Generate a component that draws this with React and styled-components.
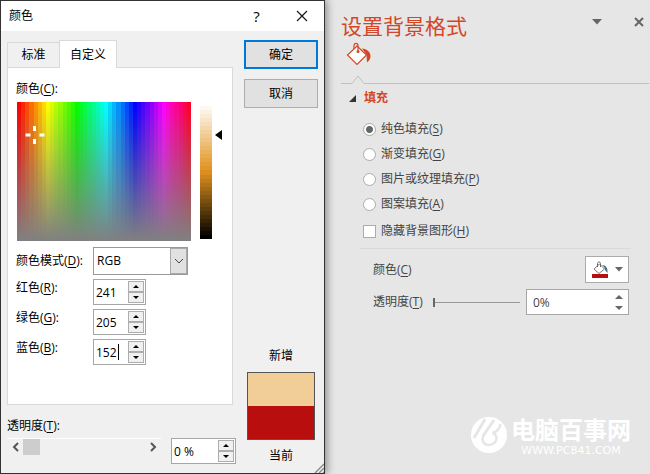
import React, { useState } from "react";
import styled, { createGlobalStyle } from "styled-components";

const GlobalStyle = createGlobalStyle`
  *, *::before, *::after {
    box-sizing: border-box;
  }
  body {
    margin: 0;
    background: #e6e6e6;
  }
  body, button, input, select {
    font-family: "Open Sans", "Noto Sans CJK SC", sans-serif;
    font-size: 12px;
    line-height: 16px;
  }
  button, input, select {
    margin: 0;
    padding: 0;
    color: inherit;
  }
  u {
    text-underline-offset: 2px;
  }
`;

const HUE_BANDS = 42;
const LIGHT_BANDS = 34;

const bands = (direction, count, colorAt) => {
  const stops = Array.from({ length: count }, (_, i) => {
    const from = (i * 100) / count;
    const to = ((i + 1) * 100) / count;
    return `${colorAt(i)} ${from}% ${to}%`;
  });
  return `linear-gradient(${direction}, ${stops.join(", ")})`;
};

const hueBands = bands(
  "to right",
  HUE_BANDS,
  (i) => `hsl(${(i * 360) / HUE_BANDS}, 100%, 50%)`
);
const lightBands = bands(
  "to bottom",
  LIGHT_BANDS,
  (i) => `hsl(36, 76%, ${100 - (i * 100) / (LIGHT_BANDS - 1)}%)`
);

function Spinner({ id, label, value, caret, flat, grow }) {
  const [text, setText] = useState(value);
  return (
    <SpinBox $grow={grow}>
      <SpinField>
        <SpinInput
          id={id}
          aria-label={label}
          value={text}
          $flat={flat}
          onChange={(e) => setText(e.target.value)}
        />
        {caret && <Caret />}
      </SpinField>
      <SpinButtons>
        <SpinButton type="button" aria-label="+" $flat={flat}>
          <Triangle $up $flat={flat} />
        </SpinButton>
        <SpinButton type="button" aria-label="-" $flat={flat}>
          <Triangle $flat={flat} />
        </SpinButton>
      </SpinButtons>
    </SpinBox>
  );
}

function ColorPicker() {
  return (
    <Picker>
      <Spectrum>
        <Crosshair viewBox="0 0 20 20">
          <path
            d="M9.5 1v5M9.5 14v5M0.5 10h5M14.5 10h5"
            stroke="#fff"
            strokeWidth="3"
            fill="none"
          />
        </Crosshair>
      </Spectrum>
      <LightBar />
      <LightMark viewBox="0 0 7 10">
        <path d="M0 5L7 0v10z" />
      </LightMark>
    </Picker>
  );
}

function ColorDialog() {
  return (
    <Dialog>
      <TitleBar>
        <DialogTitle>颜色</DialogTitle>
        <TitleButton type="button">?</TitleButton>
        <TitleButton type="button" aria-label="×">
          <svg width="12" height="12" viewBox="0 0 12 12">
            <path d="M1 1l10 10M11 1L1 11" stroke="#111" strokeWidth="1.1" />
          </svg>
        </TitleButton>
      </TitleBar>
      <DialogBody>
        <MainColumn>
          <Tabs>
            <Tab type="button">标准</Tab>
            <Tab type="button" $active>
              自定义
            </Tab>
          </Tabs>
          <TabPanel>
            <PickerLabel>
              颜色(<u>C</u>):
            </PickerLabel>
            <ColorPicker />
            <Fields>
              <FieldLabel htmlFor="mode" $middle>
                颜色模式(<u>D</u>):
              </FieldLabel>
              <SelectBox>
                <Select id="mode" defaultValue="RGB">
                  <option>RGB</option>
                </Select>
                <SelectArrow>
                  <svg width="10" height="6" viewBox="0 0 10 6">
                    <path d="M1 1l4 4 4-4" stroke="#444" fill="none" />
                  </svg>
                </SelectArrow>
              </SelectBox>
              <FieldLabel htmlFor="red">
                红色(<u>R</u>):
              </FieldLabel>
              <Spinner id="red" value="241" />
              <FieldLabel htmlFor="green">
                绿色(<u>G</u>):
              </FieldLabel>
              <Spinner id="green" value="205" />
              <FieldLabel htmlFor="blue">
                蓝色(<u>B</u>):
              </FieldLabel>
              <Spinner id="blue" value="152" caret />
            </Fields>
          </TabPanel>
          <AlphaLabel htmlFor="alpha">
            透明度(<u>T</u>):
          </AlphaLabel>
          <AlphaRow>
            <ScrollBar>
              <ScrollArrow type="button" aria-label="-">
                <svg width="7" height="10" viewBox="0 0 7 10">
                  <path d="M6 1L2 5l4 4" stroke="#555" strokeWidth="2" fill="none" />
                </svg>
              </ScrollArrow>
              <ScrollRange type="range" id="alpha" defaultValue="0" />
              <ScrollArrow type="button" aria-label="+">
                <svg width="7" height="10" viewBox="0 0 7 10">
                  <path d="M1 1l4 4-4 4" stroke="#555" strokeWidth="2" fill="none" />
                </svg>
              </ScrollArrow>
            </ScrollBar>
            <AlphaValue>
              <Spinner label="透明度" value="0 %" grow />
            </AlphaValue>
          </AlphaRow>
        </MainColumn>
        <SideColumn>
          <DialogButton type="button" $primary>
            确定
          </DialogButton>
          <DialogButton type="button">取消</DialogButton>
          <Preview>
            新增
            <Swatches>
              <Swatch $color="#f1cd98" />
              <Swatch $color="#b90e0e" />
            </Swatches>
            当前
          </Preview>
        </SideColumn>
        <Grip viewBox="0 0 10 10">
          <path d="M1 10L10 1M5 10l5-5M9 10l1-1" stroke="#888" strokeWidth="1.4" />
        </Grip>
      </DialogBody>
    </Dialog>
  );
}

const FILLS = [
  ["纯色填充", "S"],
  ["渐变填充", "G"],
  ["图片或纹理填充", "P"],
  ["图案填充", "A"],
];

function FormatPane() {
  const [fill, setFill] = useState("S");
  return (
    <Pane>
      <PaneHeader>
        <PaneTitle>设置背景格式</PaneTitle>
        <PaneButton type="button" aria-label="▾">
          <svg width="10" height="6" viewBox="0 0 10 6">
            <path d="M0 0h10L5 5.5z" fill="#666" />
          </svg>
        </PaneButton>
        <PaneButton type="button" aria-label="×">
          <svg width="10" height="10" viewBox="0 0 10 10">
            <path d="M1 1l8 8M9 1L1 9" stroke="#666" strokeWidth="2" />
          </svg>
        </PaneButton>
      </PaneHeader>
      <BucketTab type="button" aria-label="填充">
        <svg width="26" height="24" viewBox="0 0 26 24">
          <path
            d="M16 6.500c5 .5 8.500 3.500 8.500 7.500 0 2.500-1 4.500-3.500 6.500l-.5-8z"
            fill="#d24726"
          />
          <path
            d="M11 4L20.500 13 11 22.500 1.500 13z"
            fill="#fff"
            stroke="#d24726"
            strokeWidth="1.200"
          />
          <path
            d="M8 7V3.500C8 .7 12 .7 12 3.500V9"
            fill="none"
            stroke="#d24726"
            strokeWidth="1.200"
          />
          <circle cx="12" cy="9.500" r="1.500" fill="#d24726" />
        </svg>
      </BucketTab>
      <Divider>
        <DividerLine />
        <svg width="14" height="9" viewBox="0 0 14 9">
          <path d="M0 8.500h1L7 1l6 7.500h1" fill="none" stroke="#c0c0c0" />
        </svg>
        <DividerLine $rest />
      </Divider>
      <SectionTitle>
        <svg width="7" height="7" viewBox="0 0 7 7">
          <path d="M7 0v7H0z" fill="#333" />
        </svg>
        填充
      </SectionTitle>
      <Options>
        {FILLS.map(([name, key]) => (
          <Option key={key}>
            <Radio
              type="radio"
              name="fill"
              checked={fill === key}
              onChange={() => setFill(key)}
            />
            <span>
              {name}(<u>{key}</u>)
            </span>
          </Option>
        ))}
        <Option $apart>
          <Checkbox type="checkbox" />
          <span>
            隐藏背景图形(<u>H</u>)
          </span>
        </Option>
      </Options>
      <Settings>
        <SettingRow>
          <SettingLabel htmlFor="fill-color">
            颜色(<u>C</u>)
          </SettingLabel>
          <ColorButton type="button" id="fill-color">
            <svg width="18" height="18" viewBox="0 0 18 18">
              <path d="M11 4c4 0 6 3 5.500 8L14 9c0-2-1-3.500-3-5z" fill="#44708f" />
              <path d="M8.500 3L13.500 8 8 12.500 3 8z" fill="#fff" stroke="#777" />
              <path d="M6.500 6V2.500c0-2 3-2 3 0V6" fill="none" stroke="#666" />
              <path d="M1 13h16v4H1z" fill="#b90e0e" />
            </svg>
            <svg width="8" height="5" viewBox="0 0 8 5">
              <path d="M0 0h8L4 4.500z" fill="#666" />
            </svg>
          </ColorButton>
        </SettingRow>
        <SettingRow>
          <label htmlFor="pane-alpha">
            透明度(<u>T</u>)
          </label>
          <AlphaSlider type="range" id="pane-alpha" defaultValue="0" />
          <PaneValue>
            <Spinner label="透明度" value="0%" flat grow />
          </PaneValue>
        </SettingRow>
      </Settings>
      <Brand>
        <svg width="36" height="38" viewBox="0 0 36 38">
          <circle cx="18" cy="19" r="18" fill="#fff" />
          <path d="M14 3L3 22" stroke="#e6e6e6" strokeWidth="3" fill="none" />
          <path
            d="M23 4L12 20"
            stroke="#e6e6e6"
            strokeWidth="3"
            fill="none"
          />
          <path
            d="M13 18c-3 6-1 10.500 4 11 5 .5 9-3.500 8.500-7.500-.5-2.500-2-4-4-4.500 4-1 7-4 8-9"
            stroke="#e6e6e6"
            strokeWidth="2.500"
            fill="none"
          />
        </svg>
        <div>
          <BrandName>电脑百事网</BrandName>
          <BrandSite>WWW.PC841.COM</BrandSite>
        </div>
      </Brand>
    </Pane>
  );
}

export default function App() {
  return (
    <Page>
      <GlobalStyle />
      <ColorDialog />
      <FormatPane />
    </Page>
  );
}

const Page = styled.div`
  display: grid;
  grid-template-columns: minmax(0, 1fr) minmax(0, 1fr);
  min-height: 100vh;
`;

const Dialog = styled.section`
  display: flex;
  flex-direction: column;
  border: 1px solid #333;
  background: #f0f0f0;
  color: #000;
  box-shadow: 2px 0 8px rgba(0, 0, 0, 0.4);
  z-index: 1;
`;

const TitleBar = styled.header`
  display: flex;
  align-items: center;
  height: 30px;
  padding-left: 8px;
  background: #fff;
`;

const DialogTitle = styled.h1`
  flex: 1;
  margin: 0;
  font-size: 12px;
  font-weight: 400;
`;

const TitleButton = styled.button`
  display: flex;
  align-items: center;
  justify-content: center;
  width: 45px;
  height: 30px;
  border: 0;
  background: none;
  font-size: 15px;
`;

const DialogBody = styled.div`
  position: relative;
  display: flex;
  flex: 1;
  gap: 8px;
  padding: 9px 6px 8px;
`;

const MainColumn = styled.div`
  flex: 1;
  min-width: 0;
`;

const Tabs = styled.div`
  display: flex;
  align-items: flex-end;
  height: 27px;
`;

const Tab = styled.button`
  height: ${(p) => (p.$active ? 28 : 25)}px;
  width: ${(p) => (p.$active ? 58 : 52)}px;
  margin-bottom: ${(p) => (p.$active ? -1 : 0)}px;
  border: 1px solid #d9d9d9;
  border-bottom: 0;
  border-right-width: ${(p) => (p.$active ? 1 : 0)}px;
  background: ${(p) => (p.$active ? "#fff" : "#f0f0f0")};
  z-index: 1;
`;

const TabPanel = styled.div`
  min-height: 338px;
  margin-right: 3px;
  padding: 13px 8px;
  border: 1px solid #d9d9d9;
  background: #fff;
`;

const PickerLabel = styled.div`
  margin-bottom: 5px;
`;

const Picker = styled.div`
  display: flex;
  margin-left: 1px;
`;

const Spectrum = styled.div`
  position: relative;
  flex: 1;
  height: 139px;
  background: linear-gradient(to bottom, rgba(128, 128, 128, 0), #808080),
    ${hueBands};
`;

const Crosshair = styled.svg`
  position: absolute;
  left: 8px;
  top: 23px;
  width: 20px;
  height: 20px;
`;

const LightBar = styled.div`
  width: 12px;
  height: 137px;
  margin-left: 9px;
  background: ${lightBands};
`;

const LightMark = styled.svg`
  width: 7px;
  height: 10px;
  margin: 28px 2px 0 3px;
`;

const Fields = styled.div`
  display: grid;
  grid-template-columns: 77px 1fr;
  row-gap: 4px;
  margin-top: 6px;
`;

const FieldLabel = styled.label`
  padding-top: ${(p) => (p.$middle ? 6 : 1)}px;
`;

const SelectBox = styled.div`
  display: flex;
  position: relative;
  width: 95px;
  height: 28px;
  border: 1px solid #999;
  background: #fff;
`;

const Select = styled.select`
  width: 100%;
  padding-left: 3px;
  border: 0;
  background: none;
  appearance: none;
`;

const SelectArrow = styled.span`
  position: absolute;
  top: 0;
  right: 0;
  bottom: 0;
  display: flex;
  align-items: center;
  justify-content: center;
  width: 17px;
  border: 1px solid #aaa;
  background: #e1e1e1;
  pointer-events: none;
`;

const SpinBox = styled.div`
  display: flex;
  width: ${(p) => (p.$grow ? "100%" : "53px")};
  height: 26px;
  border: 1px solid #a6a6a6;
  background: #fff;
`;

const SpinField = styled.div`
  position: relative;
  flex: 1;
  min-width: 0;
`;

const SpinInput = styled.input`
  width: 100%;
  height: 24px;
  padding-left: ${(p) => (p.$flat ? 6 : 2)}px;
  border: 0;
  outline: 0;
  background: none;
`;

const Caret = styled.span`
  position: absolute;
  top: 4px;
  left: 24px;
  width: 1px;
  height: 16px;
  background: #000;
`;

const SpinButtons = styled.div`
  display: flex;
  flex-direction: column;
  width: 16px;
  margin: 1px;
`;

const SpinButton = styled.button`
  display: flex;
  flex: 1;
  align-items: center;
  justify-content: center;
  border: ${(p) => (p.$flat ? "0" : "1px solid #adadad")};
  background: ${(p) => (p.$flat ? "none" : "#f0f0f0")};
`;

const Triangle = styled.span`
  --size: ${(p) => (p.$flat ? 4 : 3)}px;
  --fill: ${(p) => (p.$flat ? "#666" : "#000")};
  border: var(--size) solid transparent;
  border-top: ${(p) => (p.$up ? "0" : "var(--size) solid var(--fill)")};
  border-bottom: ${(p) => (p.$up ? "var(--size) solid var(--fill)" : "0")};
`;

const AlphaLabel = styled.label`
  display: block;
  margin: 13px 0 4px;
`;

const AlphaRow = styled.div`
  display: flex;
  gap: 10px;
`;

const ScrollBar = styled.div`
  display: flex;
  flex: 1;
  min-width: 0;
  height: 17px;
  border-top: 1px solid #fff;
`;

const ScrollArrow = styled.button`
  display: flex;
  align-items: center;
  justify-content: center;
  width: 16px;
  border: 0;
  background: none;
`;

const ScrollRange = styled.input`
  flex: 1;
  min-width: 0;
  appearance: none;
  background: none;
  &::-webkit-slider-thumb {
    appearance: none;
    width: 17px;
    height: 16px;
    background: #cdcdcd;
  }
`;

const AlphaValue = styled.div`
  width: 65px;
`;

const SideColumn = styled.div`
  display: flex;
  flex-direction: column;
  gap: 10px;
  width: 74px;
`;

const DialogButton = styled.button`
  height: 29px;
  border: ${(p) => (p.$primary ? "2px solid #0078d7" : "1px solid #adadad")};
  background: #e1e1e1;
`;

const Preview = styled.div`
  display: flex;
  flex-direction: column;
  align-items: center;
  gap: 8px;
  margin-top: auto;
  padding-bottom: 1px;
  text-align: center;
`;

const Swatches = styled.div`
  width: 68px;
  border: 1px solid #555;
`;

const Swatch = styled.div`
  height: 33px;
  background: ${(p) => p.$color};
`;

const Grip = styled.svg`
  position: absolute;
  right: 0;
  bottom: 0;
  width: 10px;
  height: 10px;
`;

const Pane = styled.aside`
  display: flex;
  flex-direction: column;
  padding: 10px 1px 18px 16px;
  color: #444;
`;

const PaneHeader = styled.header`
  display: flex;
  align-items: flex-start;
  gap: 22px;
`;

const PaneTitle = styled.h2`
  flex: 1;
  margin: 0;
  color: #d24726;
  font-size: 21px;
  font-weight: 400;
  line-height: 32px;
`;

const PaneButton = styled.button`
  display: flex;
  align-items: center;
  justify-content: center;
  width: 20px;
  height: 24px;
  border: 0;
  background: none;
`;

const BucketTab = styled.button`
  align-self: flex-start;
  height: 24px;
  margin-left: 5px;
  border: 0;
  background: none;
`;

const Divider = styled.div`
  display: flex;
  align-items: flex-end;
  margin-top: 9px;
`;

const DividerLine = styled.span`
  flex: ${(p) => (p.$rest ? "1" : "0 0 10px")};
  height: 1px;
  background: #c0c0c0;
`;

const SectionTitle = styled.h3`
  display: flex;
  align-items: center;
  gap: 8px;
  margin: 6px 0 0 8px;
  color: #d24726;
  font-size: 12px;
  font-weight: 700;
`;

const Options = styled.div`
  display: grid;
  gap: 1px;
  margin: 11px 18px 0 22px;
  padding-bottom: 5px;
`;

const Option = styled.label`
  display: flex;
  align-items: center;
  gap: 5px;
  height: 24px;
  margin-top: ${(p) => (p.$apart ? 2 : 0)}px;
`;

const Radio = styled.input`
  appearance: none;
  width: 13px;
  height: 13px;
  border: 1px solid #ababab;
  border-radius: 50%;
  background: #fff;
  &:checked {
    background: radial-gradient(#666 3px, #fff 4px);
  }
`;

const Checkbox = styled.input`
  appearance: none;
  width: 13px;
  height: 13px;
  border: 1px solid #ababab;
  background: #fff;
`;

const Settings = styled.div`
  display: grid;
  grid-template-columns: minmax(0, 1fr);
  gap: 6px;
  margin: 0 18px 0 19px;
  padding: 7px 2px 0 13px;
  border-top: 1px solid #d9d9d9;
`;

const SettingRow = styled.div`
  display: flex;
  align-items: center;
`;

const SettingLabel = styled.label`
  flex: 1;
`;

const ColorButton = styled.button`
  display: flex;
  align-items: center;
  justify-content: center;
  gap: 6px;
  width: 44px;
  height: 27px;
  border: 1px solid #ababab;
  background: #fff;
`;

const AlphaSlider = styled.input`
  flex: 1;
  min-width: 0;
  height: 16px;
  margin: 0 6px 0 10px;
  appearance: none;
  background: linear-gradient(#999, #999) center / 100% 1px no-repeat;
  &::-webkit-slider-thumb {
    appearance: none;
    width: 2px;
    height: 9px;
    background: #666;
  }
`;

const PaneValue = styled.div`
  width: 103px;
`;

const Brand = styled.footer`
  display: flex;
  align-items: center;
  align-self: flex-end;
  gap: 4px;
  margin: auto 18px 0 0;
  color: #fff;
`;

const BrandName = styled.div`
  font-size: 24px;
  font-weight: 700;
  line-height: 32px;
`;

const BrandSite = styled.div`
  font-family: "DejaVu Sans", sans-serif;
  font-size: 11px;
  line-height: 10px;
  text-align: center;
`;
